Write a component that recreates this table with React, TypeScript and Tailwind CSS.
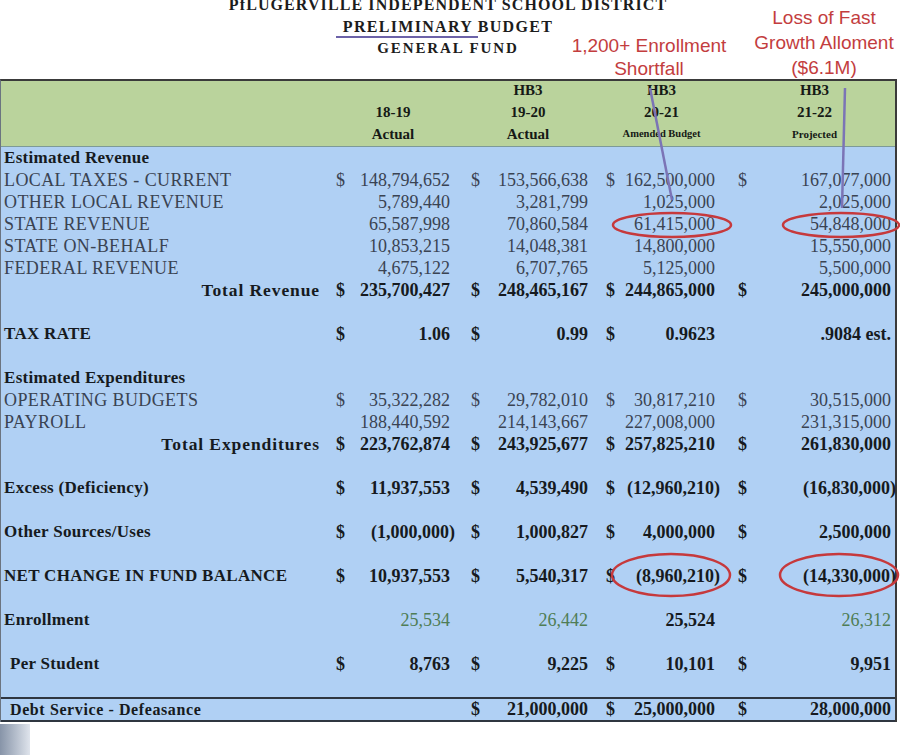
import React from 'react'

type Cell = { d?: boolean; v?: string; neg?: boolean; green?: boolean; bold?: boolean }

interface RowDef {
  label?: string
  head?: boolean
  total?: boolean
  bold?: boolean
  indent?: boolean
  cells?: Cell[]
  debt?: boolean
}

const serif = { fontFamily: '"Liberation Serif", "Times New Roman", serif' }

const rows: RowDef[] = [
  { label: 'Estimated Revenue', head: true },
  { label: 'LOCAL TAXES - CURRENT', cells: [{ d: true, v: '148,794,652' }, { d: true, v: '153,566,638' }, { d: true, v: '162,500,000' }, { d: true, v: '167,077,000' }] },
  { label: 'OTHER LOCAL REVENUE', cells: [{ v: '5,789,440' }, { v: '3,281,799' }, { v: '1,025,000' }, { v: '2,025,000' }] },
  { label: 'STATE REVENUE', cells: [{ v: '65,587,998' }, { v: '70,860,584' }, { v: '61,415,000' }, { v: '54,848,000' }] },
  { label: 'STATE ON-BEHALF', cells: [{ v: '10,853,215' }, { v: '14,048,381' }, { v: '14,800,000' }, { v: '15,550,000' }] },
  { label: 'FEDERAL REVENUE', cells: [{ v: '4,675,122' }, { v: '6,707,765' }, { v: '5,125,000' }, { v: '5,500,000' }] },
  { label: 'Total Revenue', total: true, bold: true, cells: [{ d: true, v: '235,700,427' }, { d: true, v: '248,465,167' }, { d: true, v: '244,865,000' }, { d: true, v: '245,000,000' }] },
  {},
  { label: 'TAX RATE', bold: true, cells: [{ d: true, v: '1.06' }, { d: true, v: '0.99' }, { d: true, v: '0.9623' }, { v: '.9084 est.' }] },
  {},
  { label: 'Estimated Expenditures', head: true },
  { label: 'OPERATING BUDGETS', cells: [{ d: true, v: '35,322,282' }, { d: true, v: '29,782,010' }, { d: true, v: '30,817,210' }, { d: true, v: '30,515,000' }] },
  { label: 'PAYROLL', cells: [{ v: '188,440,592' }, { v: '214,143,667' }, { v: '227,008,000' }, { v: '231,315,000' }] },
  { label: 'Total Expenditures', total: true, bold: true, cells: [{ d: true, v: '223,762,874' }, { d: true, v: '243,925,677' }, { d: true, v: '257,825,210' }, { d: true, v: '261,830,000' }] },
  {},
  { label: 'Excess (Deficiency)', bold: true, cells: [{ d: true, v: '11,937,553' }, { d: true, v: '4,539,490' }, { d: true, v: '(12,960,210)', neg: true }, { d: true, v: '(16,830,000)', neg: true }] },
  {},
  { label: 'Other Sources/Uses', bold: true, cells: [{ d: true, v: '(1,000,000)', neg: true }, { d: true, v: '1,000,827' }, { d: true, v: '4,000,000' }, { d: true, v: '2,500,000' }] },
  {},
  { label: 'NET CHANGE IN FUND BALANCE', bold: true, cells: [{ d: true, v: '10,937,553' }, { d: true, v: '5,540,317' }, { d: true, v: '(8,960,210)', neg: true }, { d: true, v: '(14,330,000)', neg: true }] },
  {},
  { label: 'Enrollment', bold: true, cells: [{ v: '25,534', green: true }, { v: '26,442', green: true }, { v: '25,524' }, { v: '26,312', green: true }] },
  {},
  { label: 'Per Student', bold: true, indent: true, cells: [{ d: true, v: '8,763' }, { d: true, v: '9,225' }, { d: true, v: '10,101' }, { d: true, v: '9,951' }] },
  {},
]

const colCls = [
  'w-[120px] pl-[3px] pr-[3px]',
  'w-[138px] pl-[18px] pr-[3px]',
  'w-[127px] pl-[15px] pr-[3px]',
  'w-[177px] pl-[20px] pr-[4px]',
]

function Cells({ cells, bold }: { cells?: Cell[]; bold?: boolean }) {
  return (
    <>
      {colCls.map((cls, i) => {
        const c = cells?.[i]
        return (
          <div key={i} className={`${cls} flex items-center justify-between`}>
            <span>{c?.d ? '$' : ''}</span>
            {c?.v && (
              <span
                className={`${c.neg ? 'mr-[-5px]' : ''} ${c.green ? 'text-[#4f7d55] font-normal' : ''} ${
                  bold && !c.green ? 'font-bold text-[#161a20]' : ''
                }`}
              >
                {c.v}
              </span>
            )}
          </div>
        )
      })}
    </>
  )
}

function Row({ r }: { r: RowDef }) {
  if (r.head) {
    return (
      <div className="h-[22px] flex items-center pl-[3px] font-bold text-[17px] tracking-[0.3px] text-[#161a20]">{r.label}</div>
    )
  }
  return (
    <div className={`h-[22px] flex items-center ${r.bold ? 'font-bold text-[#161a20]' : 'text-[#3a4352]'}`}>
      <div
        className={`flex-1 ${
          r.total
            ? 'text-right pr-[13px] text-[17.5px] tracking-[0.9px]'
            : r.indent
              ? 'pl-[9px] text-[17px] tracking-[0.3px]'
              : r.bold
                ? 'pl-[3px] text-[17px] tracking-[0.3px]'
                : 'pl-[3px] tracking-[0.4px]'
        }`}
      >
        {r.label}
      </div>
      <Cells cells={r.cells} bold={r.bold} />
    </div>
  )
}

function HeadCol({ cls, lines }: { cls: string; lines: { t: string; size: string }[] }) {
  return (
    <div className={`${cls} flex flex-col items-center justify-end`}>
      {lines.map((l, i) => (
        <div key={i} className={`h-[22px] leading-[22px] ${l.size}`}>
          {l.t}
        </div>
      ))}
    </div>
  )
}

export default function App() {
  return (
    <div className="relative w-[900px] h-[755px] overflow-hidden bg-white text-[18px]" style={serif}>
      <div className="h-[85px] w-[896px] -mt-[6px] flex flex-col items-center font-bold text-[#1c1c1c]">
        <div className="h-[22px] leading-[22px] text-[16px] tracking-[1.1px]">PfLUGERVILLE INDEPENDENT SCHOOL DISTRICT</div>
        <div className="h-[21px] leading-[21px] text-[16px] tracking-[1.3px]">PRELIMINARY BUDGET</div>
        <div className="h-[22px] leading-[22px] text-[15px] tracking-[1.9px]">GENERAL FUND</div>
      </div>

      <div className="w-[897px] border-t-2 border-r-2 border-l border-t-[#3a3a3a] border-r-[#3a3a3a] border-l-[#6b7480] bg-[#b0d0f4]">
        <div className="h-[66px] flex bg-[#bad39c] border-b border-[#7d9a98] font-bold text-[#161a16]">
          <div className="flex-1" />
          <HeadCol cls="w-[120px] pb-[1px]" lines={[{ t: '18-19', size: 'text-[15px]' }, { t: 'Actual', size: 'text-[15px]' }]} />
          <HeadCol cls="w-[138px] pl-[12px] pb-[1px]" lines={[{ t: 'HB3', size: 'text-[15px]' }, { t: '19-20', size: 'text-[15px]' }, { t: 'Actual', size: 'text-[15px]' }]} />
          <HeadCol cls="w-[127px] pl-[14px] pb-[1px]" lines={[{ t: 'HB3', size: 'text-[15px]' }, { t: '20-21', size: 'text-[15px]' }, { t: 'Amended Budget', size: 'text-[10.5px]' }]} />
          <HeadCol cls="w-[177px] pl-[16px] pb-[1px]" lines={[{ t: 'HB3', size: 'text-[15px]' }, { t: '21-22', size: 'text-[15px]' }, { t: 'Projected', size: 'text-[11px]' }]} />
        </div>
        {rows.map((r, i) => (
          <Row key={i} r={r} />
        ))}
        <div className="h-[25px] flex items-center border-y-2 border-[#2f3640] font-bold text-[#161a20]">
          <div className="flex-1 pl-[9px] text-[16px] tracking-[0.6px]">Debt Service - Defeasance</div>
          <Cells cells={[{}, { d: true, v: '21,000,000' }, { d: true, v: '25,000,000' }, { d: true, v: '28,000,000' }]} bold />
        </div>
      </div>
      <div className="mt-[2px] w-[30px] h-[31px] bg-gradient-to-r from-[#8794a8] to-[#dfe4ec]" />

      <div
        className="absolute text-[#c33d3e] text-[19px] leading-[23px] text-center"
        style={{ fontFamily: '"Liberation Sans", Arial, sans-serif', left: 566, top: 34, width: 166 }}
      >
        1,200+ Enrollment
        <br />
        Shortfall
      </div>
      <div
        className="absolute text-[#c33d3e] text-[19px] leading-[25px] text-center"
        style={{ fontFamily: '"Liberation Sans", Arial, sans-serif', left: 748, top: 5, width: 152 }}
      >
        Loss of Fast
        <br />
        Growth Alloment
        <br />
        ($6.1M)
      </div>

      <svg className="absolute left-0 top-0 pointer-events-none" width="900" height="755">
        <line x1="336" y1="37" x2="478" y2="37" stroke="#6c62a8" strokeWidth="2" />
        <line x1="650" y1="88" x2="672" y2="200" stroke="#7b74b6" strokeWidth="2.5" />
        <line x1="845" y1="88" x2="842" y2="208" stroke="#7b74b6" strokeWidth="2.5" />
        <ellipse cx="672" cy="225" rx="59" ry="12" fill="none" stroke="#c6393c" strokeWidth="2.5" />
        <ellipse cx="841" cy="225" rx="58" ry="12" fill="none" stroke="#c6393c" strokeWidth="2.5" />
        <ellipse cx="671" cy="575" rx="59" ry="21" fill="none" stroke="#c6393c" strokeWidth="2.5" />
        <ellipse cx="839" cy="575" rx="59" ry="21" fill="none" stroke="#c6393c" strokeWidth="2.5" />
      </svg>
    </div>
  )
}
